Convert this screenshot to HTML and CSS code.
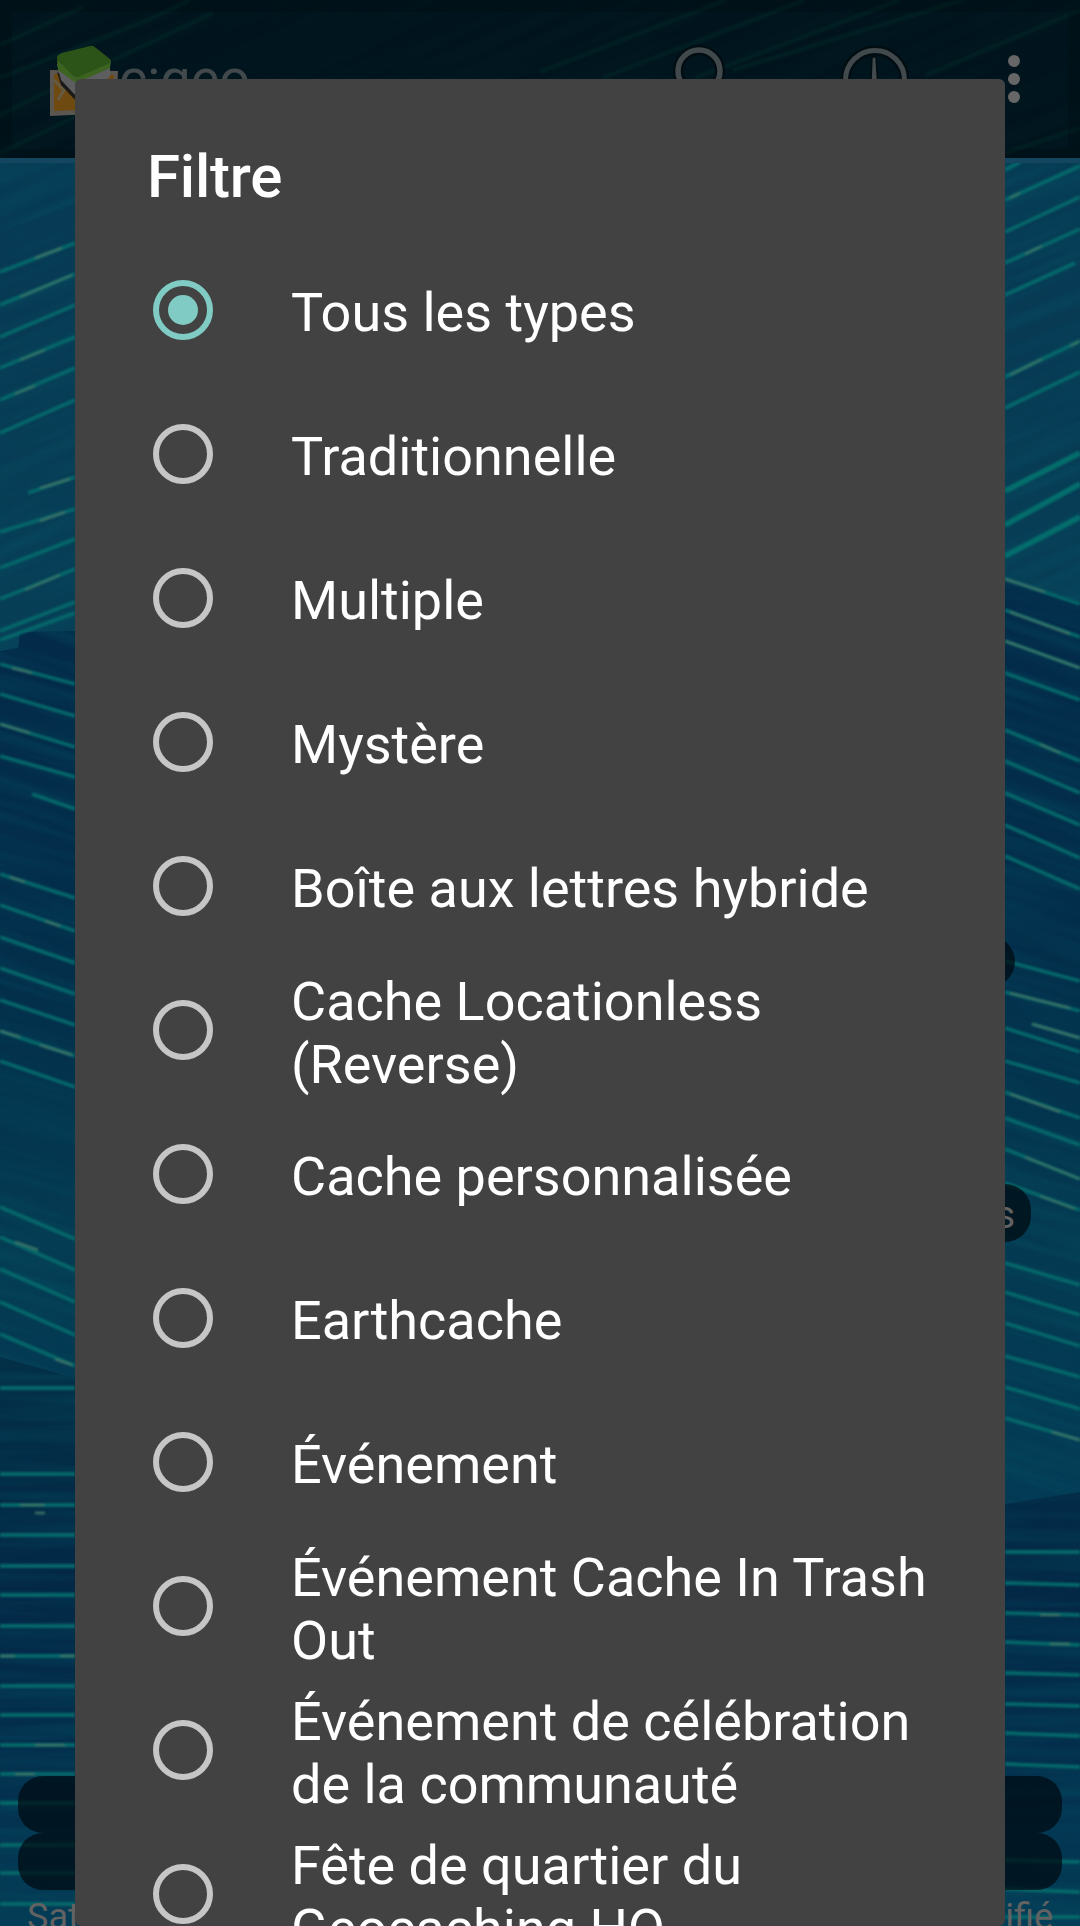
FILE: index.html
```html
<!DOCTYPE html>
<html lang="fr">
<head>
<meta charset="utf-8">
<title>Filtre</title>
<link rel="stylesheet" href="styles.css">
</head>
<body>
<div class="screen">
  <svg class="wallpaper" width="1080" height="1926" viewBox="0 0 1080 1926" aria-hidden="true">
    <defs>
      <linearGradient id="upper" x1="0" y1="0" x2="0" y2="1"><stop offset="0" stop-color="#053c55"/><stop offset=".5" stop-color="#083a54"/><stop offset="1" stop-color="#073f57"/></linearGradient>
      <linearGradient id="middle" x1="0" y1="0" x2="0" y2="1"><stop offset="0" stop-color="#032a49"/><stop offset=".45" stop-color="#032f4b"/><stop offset=".7" stop-color="#043a51"/><stop offset="1" stop-color="#033a55"/></linearGradient>
      <linearGradient id="lower" x1="0" y1="0" x2="0" y2="1"><stop offset="0" stop-color="#032f47"/><stop offset=".4" stop-color="#032846"/><stop offset=".75" stop-color="#03304e"/><stop offset="1" stop-color="#043c56"/></linearGradient>
      <filter id="grain" x="0" y="0" width="100%" height="100%" color-interpolation-filters="sRGB"><feTurbulence type="fractalNoise" baseFrequency=".004 .07" numOctaves="3" seed="4"/><feColorMatrix values="0 0 0 0 .02  0 0 0 0 .36  0 0 0 0 .42  2 0 0 0 -.75"/></filter>
      <filter id="soft" x="0" y="0" width="1080" height="1926" filterUnits="userSpaceOnUse" color-interpolation-filters="sRGB"><feGaussianBlur stdDeviation="1.1"/></filter>
      <clipPath id="cu"><path d="M0 0H1080V602L1005 579 75 631 20 632 18 648 0 651Z"/></clipPath>
      <clipPath id="cm"><path d="M0 651L18 648 20 632 75 631 1005 579 1080 602V1492L1005 1504 75 1378 0 1357Z"/></clipPath>
      <clipPath id="cl"><path d="M0 1357L75 1378 1005 1504 1080 1492V1926H0Z"/></clipPath>
    </defs>
    <rect width="1080" height="660" fill="url(#upper)"/>
    <path fill="url(#middle)" d="M0 651L18 648 20 632 75 631 1005 579 1080 602V1510H0Z"/>
    <path fill="url(#lower)" d="M0 1357L75 1378 1005 1504 1080 1492V1926H0Z"/>
    <g opacity=".3">
      <g clip-path="url(#cu)"><rect x="-400" y="-300" width="1900" height="1300" filter="url(#grain)" transform="rotate(-23 540 300)"/></g>
      <g clip-path="url(#cm)"><rect x="-400" y="300" width="1900" height="1500" filter="url(#grain)" transform="rotate(17 540 1000)"/></g>
      <g clip-path="url(#cl)"><rect y="1340" width="1080" height="586" filter="url(#grain)"/></g>
    </g>
    <g class="streaks" filter="url(#soft)">
      <path class="streak" d="M0 45L83 7M0 78L148 20 190 0M0 115L75 78M113 60L213 13M0 153L75 117M540 72L726 0M602 78L805 0M695 78L900 0M733 70L963 0M926 75L1080 10M1005 153L1080 128M1005 170L1020 162"/>
      <path class="streak" d="M0 272L75 243M0 305L75 274M0 337L75 305M0 368L75 337M0 400L75 368M0 433L75 400M28 493L75 477M0 532L75 509M0 568L75 539M0 599L75 569M0 631L75 602M0 640L75 613"/>
      <path class="streak" d="M1005 200L1080 166M1005 232L1080 197M1005 263L1080 229M1005 295L1075 263M1005 377L1080 341M1005 408L1080 372"/>
      <path class="streak wide" d="M1005 491L1080 453M1005 525L1080 484M1005 556L1080 517"/>
      <path class="streak" d="M0 664L75 684M0 694L75 716M0 724L75 747M0 756L75 777M32 794L75 809M0 874L75 898M0 905L75 931M0 937L75 963M0 968L75 994M0 1000L75 1025M0 1031L75 1056M0 1061L75 1087M0 1207L75 1239M0 1237L75 1270M0 1269L75 1302M0 1302L75 1335M0 1334L75 1366"/>
      <path class="streak" d="M1005 579L1080 604M1005 610L1080 637M1005 641L1080 668M1005 673L1080 700M1005 730L1080 761M1005 761L1080 793M1005 793L1080 825M1005 825L1080 858M1005 856L1080 889M1005 961L1080 981M1005 992L1080 1011M1032 1024L1080 1038M1005 1028L1080 1052M1005 1061L1080 1083M1005 1092L1080 1118M1005 1118L1080 1145M1005 1149L1080 1179M1005 1183L1080 1210M1005 1263L1080 1285M1005 1292L1080 1315M1005 1323L1080 1346M1005 1356L1080 1377M1005 1387L1080 1409M1005 1418L1080 1440"/>
      <path class="streak" d="M0 1388H75M0 1474H75M0 1505H75M0 1535H75M0 1566H75M0 1595H75M0 1626H75M0 1656H75M0 1686H75M0 1715H75M0 1745H75M0 1774H75M0 1803H75M0 1845H75M0 1873H75M0 1904H75"/>
      <path class="streak" d="M1005 1552H1080M1005 1583L1080 1585M1005 1613L1080 1615M1005 1642L1080 1645M1005 1673L1080 1675M1005 1704L1080 1706M1005 1733L1080 1736M1005 1764L1080 1767M1005 1860L1080 1862M1005 1889L1080 1892M1005 1917H1080"/>
      <path class="glint" d="M35 258L62 248M20 297L72 275M20 360L45 350M15 394L35 386M40 488L70 479M40 521L65 512M25 590L60 575M12 668L32 673M0 724L30 733M10 877L25 882M45 921L60 926M0 1031L20 1037M40 1045L72 1055M35 1513L45 1513M0 1656H15M60 1656H75M35 1745H65M15 1774H35M15 1242L38 1250M55 1359L72 1365M20 1505H45"/>
      <path class="glint" d="M1010 198L1020 193M1025 254L1042 246M1010 375L1042 359M1070 346L1080 341M1005 579L1045 592M1010 612L1070 634M1005 641L1080 668M1040 744L1060 753M1010 993L1070 1008M1032 1024L1080 1038M1010 1094L1060 1112M1025 1157L1080 1179M1040 1196L1075 1209M1052 1432L1080 1440M1040 1615H1060M1050 1644H1070"/>
    </g>
  </svg>

  <header class="bar">
    <svg class="logo" width="75" height="78" viewBox="0 0 75 78" aria-hidden="true">
      <path d="M2 28L70 29 68 71 2 74Z" fill="#5b5650"/>
      <path d="M6 32L66 33 64 67 6 69Z" fill="#6e4a10"/>
      <path d="M6 38L16 48 28 41M16 48L10 58" stroke="#665a42" stroke-width="3" fill="none"/>
      <path d="M9 30L13 43 29 60 40 50Z" fill="#1c1a18"/>
      <path d="M9 22L13 38 29 55 62 35 62 22Z" fill="#5c5e60"/>
      <path d="M9 17L27 36 63 19 62 26 28 41 10 28Z" fill="#3c6420"/>
      <path d="M9 17Q8 13 14 11L42 4Q45 3 48 6L62 17Q65 20 60 22L30 35Q27 36 24 33Z" fill="#2c5418"/>
    </svg>
    <span class="brand">c:geo</span>
    <svg class="icon-search" width="70" height="72" viewBox="0 0 70 72" aria-hidden="true">
      <circle cx="29" cy="29" r="21" fill="none" stroke="#020d12" stroke-width="10"/>
      <path d="M43 46L64 67" stroke="#42494c" stroke-width="7"/>
      <circle cx="29" cy="29" r="21" fill="none" stroke="#42494c" stroke-width="5.5"/>
    </svg>
    <svg class="icon-nav" width="72" height="72" viewBox="0 0 72 72" aria-hidden="true">
      <circle cx="36" cy="36" r="29.5" fill="none" stroke="#020d12" stroke-width="10"/>
      <circle cx="36" cy="36" r="29.5" fill="none" stroke="#42494c" stroke-width="5"/>
      <path d="M33 13H37L38.500 36H32Z" fill="#42494c" stroke="#020d12" stroke-width="1.500"/>
    </svg>
    <svg class="icon-more" width="12" height="50" viewBox="0 0 12 50" aria-hidden="true"><g fill="#666"><circle cx="6" cy="7" r="6"/><circle cx="6" cy="25" r="6"/><circle cx="6" cy="43" r="6"/></g></svg>
  </header>
  <div class="pill pill-a"></div>
  <div class="pill pill-b">s</div>
  <footer class="status">
    <div class="track"></div>
    <div class="track"></div>
    <div class="labels"><span>Sat</span><span>ifié</span></div>
  </footer>

  <section class="dialog" role="dialog" aria-labelledby="title">
    <h1 class="title" id="title">Filtre</h1>
    <ul class="options">
      <li class="option"><span class="radio checked"></span><span class="label">Tous les types</span></li>
      <li class="option"><span class="radio"></span><span class="label">Traditionnelle</span></li>
      <li class="option"><span class="radio"></span><span class="label">Multiple</span></li>
      <li class="option"><span class="radio"></span><span class="label">Mystère</span></li>
      <li class="option"><span class="radio"></span><span class="label">Boîte aux lettres hybride</span></li>
      <li class="option"><span class="radio"></span><span class="label">Cache Locationless<br>(Reverse)</span></li>
      <li class="option"><span class="radio"></span><span class="label">Cache personnalisée</span></li>
      <li class="option"><span class="radio"></span><span class="label">Earthcache</span></li>
      <li class="option"><span class="radio"></span><span class="label">Événement</span></li>
      <li class="option"><span class="radio"></span><span class="label">Événement Cache In Trash<br>Out</span></li>
      <li class="option"><span class="radio"></span><span class="label">Événement de célébration<br>de la communauté</span></li>
      <li class="option"><span class="radio"></span><span class="label">Fête de quartier du<br>Geocaching HQ</span></li>
    </ul>
  </section>
</div>
</body>
</html>
```
FILE: styles.css
```css
* { box-sizing: border-box; }
body { margin: 0; background: #03304a; font-family: Roboto, "Liberation Sans", sans-serif; }
.screen { position: relative; width: 1080px; height: 1926px; overflow: hidden; }
.wallpaper { position: absolute; inset: 0; }
.streak { fill: none; stroke: #05686a; stroke-width: 3.8; }
.streak.wide { stroke: #046e6c; stroke-width: 5.5; }
.glint { fill: none; stroke: #3d7367; stroke-width: 2.4; }

.bar {
  position: relative;
  display: flex;
  align-items: flex-start;
  height: 163px;
  padding-left: 48px;
  background: rgba(0, 5, 9, .72);
  border-bottom: 5px solid #144660;
  background-clip: padding-box;
}
.bar::after {
  content: "";
  position: absolute;
  inset: 0;
  border: 12px solid rgba(0, 0, 0, .15);
  border-bottom-width: 9px;
}
.logo { margin-top: 42px; }
.brand { margin: 49px 0 0 -4px; width: 132px; font-size: 54px; line-height: 60px; color: #42494c; }
.icon-search { margin: 42px 0 0 419px; }
.icon-nav { margin: 44px 0 0 99px; }
.icon-more { margin: 54px 0 0 97px; }

.pill { position: absolute; background: rgba(0, 9, 14, .7); border-radius: 26px; }
.pill-a { left: 900px; top: 936px; width: 115px; height: 51px; }
.pill-b { left: 900px; top: 1184px; width: 131px; height: 58px; padding-right: 16px; text-align: right; font-size: 38px; line-height: 62px; color: #626262; }

.status { position: absolute; left: 18px; right: 18px; top: 1776px; }
.track { height: 57px; border-radius: 25px; background: rgba(0, 9, 14, .7); }
.labels { display: flex; justify-content: space-between; padding: 6px 9px 0; font-size: 36px; line-height: 42px; color: #626262; }

.dialog {
  position: absolute;
  left: 75px;
  top: 79px;
  width: 930px;
  height: 1847px;
  overflow: hidden;
  padding-top: 63px;
  border-radius: 6px;
  background: #424242;
  color: #fff;
}
.title { margin: 0 0 26px 72px; font-size: 60px; font-weight: 500; line-height: 70px; letter-spacing: -.2px; }
.options { margin: 0; padding: 0; list-style: none; }
.option { display: flex; align-items: center; height: 144px; padding-left: 78px; }
.radio { flex: none; width: 60px; height: 60px; border: 6px solid #c6c6c6; border-radius: 50%; }
.radio.checked { display: grid; place-items: center; border-color: #80cbc4; }
.radio.checked::before { content: ""; width: 30px; height: 30px; border-radius: 50%; background: #80cbc4; }
.label { margin-left: 78px; padding-top: 5px; font-size: 54px; line-height: 63px; white-space: nowrap; }
```
